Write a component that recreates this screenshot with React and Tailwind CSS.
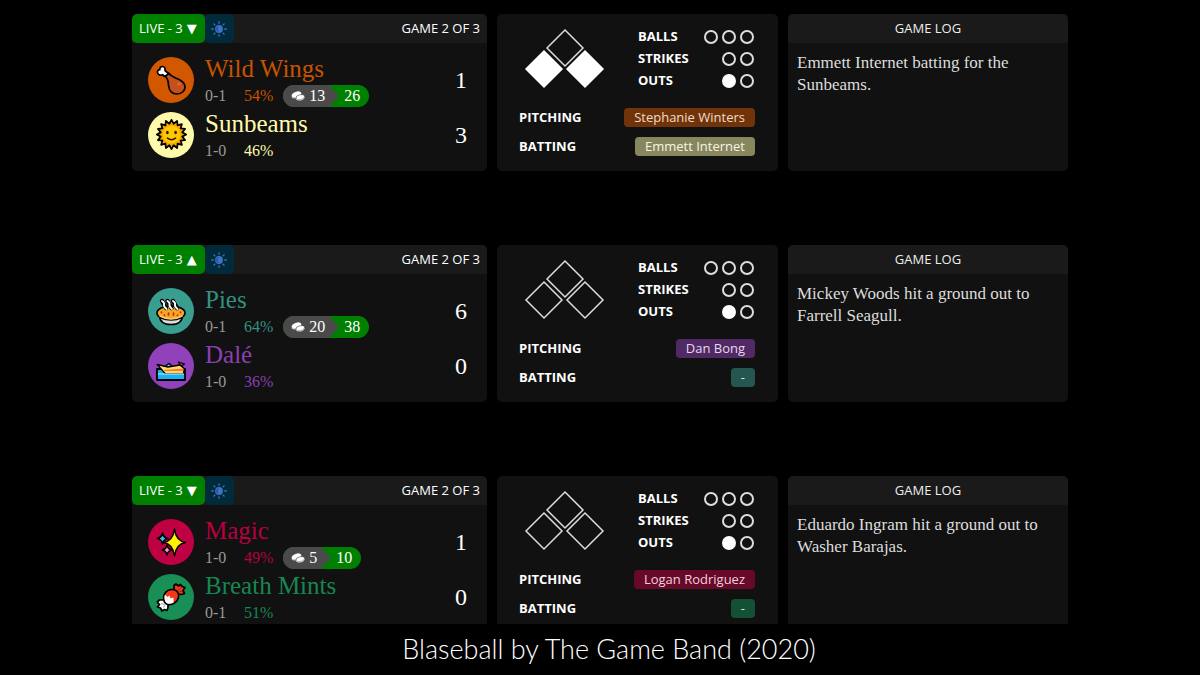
import clsx from "clsx";

const games = [
  {
    half: "▼",
    away: { name: "Wild Wings", record: "0-1", odds: "54%", score: 1, text: "text-[#c75300]", bg: "bg-[#d15700]", Icon: Drumstick },
    home: { name: "Sunbeams", record: "1-0", odds: "46%", score: 3, text: "text-[#fffbab]", bg: "bg-[#fffbab]", Icon: SunFace },
    bet: { stake: 13, payout: 26 },
    bases: [true, false, true],
    pitcher: { name: "Stephanie Winters", bg: "bg-[#713408]", text: "text-[#f0dccb]" },
    batter: { name: "Emmett Internet", bg: "bg-[#88865e]", text: "text-[#f6f5e2]" },
    log: "Emmett Internet batting for the Sunbeams.",
  },
  {
    half: "▲",
    away: { name: "Pies", record: "0-1", odds: "64%", score: 6, text: "text-[#349083]", bg: "bg-[#399d8f]", Icon: Pie },
    home: { name: "Dalé", record: "1-0", odds: "36%", score: 0, text: "text-[#8c3fb3]", bg: "bg-[#9141ba]", Icon: Speedboat },
    bet: { stake: 20, payout: 38 },
    bases: [false, false, false],
    pitcher: { name: "Dan Bong", bg: "bg-[#512965]", text: "text-[#e6daec]" },
    batter: { name: "-", bg: "bg-[#255750]", text: "text-[#d5e9e6]" },
    log: "Mickey Woods hit a ground out to Farrell Seagull.",
  },
  {
    half: "▼",
    away: { name: "Magic", record: "1-0", odds: "49%", score: 1, text: "text-[#b80041]", bg: "bg-[#bf0043]", Icon: Sparkles },
    home: { name: "Breath Mints", record: "0-1", odds: "51%", score: 0, text: "text-[#178751]", bg: "bg-[#178f55]", Icon: Candy },
    bet: { stake: 5, payout: 10 },
    bases: [false, false, false],
    pitcher: { name: "Logan Rodriguez", bg: "bg-[#68092a]", text: "text-[#edd2db]" },
    batter: { name: "-", bg: "bg-[#145033]", text: "text-[#d0e8dc]" },
    log: "Eduardo Ingram hit a ground out to Washer Barajas.",
  },
];

function Drumstick() {
  return (
    <svg viewBox="0 0 30 30" className="size-[30px]" stroke="#000" strokeWidth="1.700" strokeLinejoin="round">
      <path d="M9 11 C12 14 12.500 17 12.500 20 C13 26 16.500 29 21 29 C26 29 29.200 25.500 29 21.500 C28.500 16 23 14.500 19.500 13 C16 11.500 14 10 12.500 8 Z" fill="#c4501b" />
      <path d="M8.500 11.500 L6.500 9.700 C4.500 10.800 1.800 9.800 1.500 7.500 C1.200 5.800 2.300 4.700 3.800 4.700 C3.800 2.500 5 1.300 6.700 1.500 C8.700 1.900 9.500 3.800 9 5.500 L12.800 8.800 Z" fill="#fff" />
      <circle cx="23" cy="19" r="1.800" fill="#d86a3a" stroke="none" />
    </svg>
  );
}

function SunFace() {
  const points = Array.from({ length: 32 }, (_, i) => {
    const r = i % 2 ? 10.6 : 14.2;
    const a = (i * Math.PI) / 16;
    return `${15 + r * Math.sin(a)},${15 - r * Math.cos(a)}`;
  }).join(" ");
  return (
    <svg viewBox="0 0 30 30" className="size-[31px]">
      <polygon points={points} fill="#f7a800" stroke="#000" strokeWidth="1.700" strokeLinejoin="round" />
      <circle cx="15" cy="15" r="8.500" fill="#ffc800" />
      <ellipse cx="11" cy="13" rx="1.300" ry="1.700" fill="#2b1c00" />
      <ellipse cx="19" cy="13" rx="1.300" ry="1.700" fill="#2b1c00" />
      <path d="M11 18.500 Q15 21.500 19 18.500" fill="none" stroke="#2b1c00" strokeWidth="1.400" strokeLinecap="round" />
    </svg>
  );
}

function Pie() {
  return (
    <svg viewBox="0 0 30 30" className="size-[30px]" strokeLinejoin="round" strokeLinecap="round">
      <path d="M3.500 19 C3.500 25 7 28.500 15 28.500 C23 28.500 26.500 25 26.500 19 Z" fill="#dcdcdc" stroke="#000" strokeWidth="1.600" />
      <ellipse cx="15" cy="17" rx="14" ry="7" fill="#f5a623" stroke="#000" strokeWidth="1.600" />
      <path d="M4 20 Q15 26 26 20" fill="none" stroke="#f8c86a" strokeWidth="1.500" />
      <g fill="none" stroke="#000" strokeWidth="4.400">
        <path d="M6 5 L10 12M11.500 5 L15.500 12M17 5 L21 12" />
      </g>
      <g fill="none" stroke="#fff" strokeWidth="1.900">
        <path d="M6 5 Q8.500 6.500 8 8.500 T10.500 13M11.500 5 Q14 6.500 13.500 8.500 T16 13M17 5 Q19.500 6.500 19 8.500 T21.500 13" />
      </g>
      <path d="M5.500 16v.500M8.500 19v.500M12.500 17v2M17.500 17v2M21.500 19v.500M24.500 16v.500" stroke="#c3281c" strokeWidth="1.700" />
    </svg>
  );
}

function Speedboat() {
  return (
    <svg viewBox="0 0 30 30" className="size-[30px]" strokeLinejoin="round">
      <path d="M1 18 H29 V29 H1 Z" fill="#16b4f0" stroke="#000" strokeWidth="1.800" />
      <path d="M9.500 15 L13 12.500 L17 16" fill="#5fd0ee" stroke="#000" strokeWidth="1.500" />
      <path d="M22.500 11 L28.500 13 L26 14.500 L25 17 Z" fill="#b8422f" stroke="#000" strokeWidth="1.300" />
      <path d="M1.200 13.500 L12 16 L24 14 L28 17.500 L27.500 23 H9.500 Z" fill="#ffd866" stroke="#000" strokeWidth="1.300" />
      <path d="M7 19 L27.500 17.500 L27.500 20 H8.500 Z" fill="#f58233" />
      <path d="M2 23 H28 V28 H2 Z" fill="#16b4f0" />
      <path d="M2 23 H28" fill="none" stroke="#bfeeff" strokeWidth="1.200" />
    </svg>
  );
}

function Sparkles() {
  return (
    <svg viewBox="0 0 30 30" className="size-[30px]" stroke="#000" strokeWidth="1.500" strokeLinejoin="round">
      <path d="M18.500 2 Q20 14 29.500 15.500 Q20 17 18.500 29 Q17 17 7.500 15.500 Q17 14 18.500 2 Z" fill="#fff100" />
      <path d="M6.500 6 Q7.300 10.700 12 11.500 Q7.300 12.300 6.500 17 Q5.700 12.300 1 11.500 Q5.700 10.700 6.500 6 Z" fill="#34c6f4" />
      <path d="M11 18 Q11.800 22.200 16 23 Q11.800 23.800 11 28 Q10.200 23.800 6 23 Q10.200 22.200 11 18 Z" fill="#f59ac4" />
    </svg>
  );
}

function Candy() {
  return (
    <svg viewBox="0 0 30 30" className="size-[30px]" stroke="#000" strokeWidth="1.700" strokeLinejoin="round">
      <path d="M18 9.500 L18 3.500 L20 2 L22.500 4 L24.500 2.500 L26 4.500 L29 5.500 L27 8.500 L28.500 11.500 L25.500 12.500 L20.500 12 Z" fill="#f03a17" />
      <path d="M9 18 L3.500 18 L1.300 20 L3.500 22.500 L1.500 25 L4.500 26 L6 29 L8.500 27.500 L11 28.500 L12 25.500 L12 21 Z" fill="#fff" />
      <path d="M8 18.500 C6.500 13 10 7.500 16 7.500 C21 7.500 23.500 11.500 22.500 15.500 C21.500 20 16.500 23.500 12 22.500 C10 22 8.500 20.500 8 18.500 Z" fill="#f03a17" />
      <path d="M9 12.500 L11.500 15 L13.500 13.500 L14.500 16.500 L17.500 15.500 L17.500 20.700 C15.500 21.800 13.500 22 12 21.700 C10.300 21.300 9.200 20 8.800 18.300 C8.300 16 8.300 14 9 12.500 Z" fill="#fff" stroke="none" />
      <path d="M5 21.500 L8.500 22.500M7.500 25.500 L9 23" stroke="#999" strokeWidth="0.900" />
      <path d="M21 9 L24.500 6M22 10 L26 9.500" stroke="#a81d08" strokeWidth="0.900" />
    </svg>
  );
}

function Eclipse() {
  return (
    <svg viewBox="0 0 16 16" className="size-4" fill="#3d73c9" role="img" aria-label="Solar eclipse">
      <circle cx="8" cy="8" r="3.900" />
      <path d="M8 5 A3 3 0 0 0 8 11 A4.500 4.500 0 0 1 8 5 Z" fill="#2a55a0" />
      <g stroke="#3d73c9" strokeWidth="1.300" strokeLinecap="round">
        <path d="M8 .8v1.400M8 13.800v1.400M.8 8h1.400M13.800 8h1.400M2.900 2.900l1 1M12.100 12.100l1 1M2.900 13.100l1-1M12.100 3.900l1-1" />
      </g>
    </svg>
  );
}

function Coins() {
  return (
    <svg viewBox="0 0 14 11" className="h-[11px] w-[14px]" aria-hidden="true">
      <ellipse cx="5.500" cy="4.600" rx="5" ry="2.900" transform="rotate(-22 5.500 4.600)" fill="#fff" />
      <path d="M.8 6.600 C2.500 8.400 4.500 8 6 7.400" fill="none" stroke="#ccc" strokeWidth="1.300" />
      <ellipse cx="9.300" cy="7.200" rx="4.400" ry="2.500" transform="rotate(-14 9.300 7.200)" fill="#fff" stroke="#4a4a4a" strokeWidth="0.600" />
      <path d="M5.200 9 C7.500 11 12 10.200 13.500 7.600" fill="none" stroke="#ddd" strokeWidth="1" />
    </svg>
  );
}

function Bet({ stake, payout }) {
  return (
    <span className="ml-[10px] flex h-[22px] items-center overflow-hidden rounded-full bg-[#008000] text-white">
      <span className="flex h-full items-center gap-1 bg-[#4a4a4a] pr-1 pl-2">
        <Coins />
        {stake}
      </span>
      <svg viewBox="0 0 10 22" className="h-[22px] w-[10px]" aria-hidden="true">
        <path d="M0 0 L10 11 L0 22 Z" fill="#4a4a4a" />
      </svg>
      <span className="pr-[9px] pl-[5px]">{payout}</span>
    </span>
  );
}

function Team({ team, bet }) {
  const { Icon } = team;
  return (
    <div className="flex h-[55px] items-center">
      <div className={clsx("flex size-[46px] shrink-0 items-center justify-center rounded-full", team.bg)}>
        <Icon />
      </div>
      <div className="ml-[11px] flex-1">
        <h2 className={clsx("text-[25px] leading-[32px]", team.text)}>{team.name}</h2>
        <div className="flex h-[22px] items-center text-[16px] leading-[22px]">
          <span className="w-[39px] text-[#999]">{team.record}</span>
          <span className={team.text}>{team.odds}</span>
          {bet && <Bet {...bet} />}
        </div>
      </div>
      <div className="text-[24px] text-white">{team.score}</div>
    </div>
  );
}

function Bases({ bases }) {
  const spots = [
    [20, 41],
    [41, 20],
    [61, 41],
  ];
  return (
    <svg viewBox="0 0 81 61" className="h-[61px] w-[81px]" role="img" aria-label="Bases">
      {spots.map(([x, y], i) => (
        <path
          key={x}
          d={`M${x} ${y - 18} l18 18 l-18 18 l-18 -18 Z`}
          fill={bases[i] ? "#fff" : "none"}
          stroke={bases[i] ? "#fff" : "#ddd"}
          strokeWidth="1.500"
        />
      ))}
    </svg>
  );
}

function Count({ label, total, filled = 0 }) {
  return (
    <div className="flex h-[22px] items-center justify-between">
      <span className="font-bold">{label}</span>
      <span className="flex gap-1">
        {Array.from({ length: total }, (_, i) => (
          <span
            key={i}
            className={clsx("size-[14px] rounded-full border-2", i < filled ? "border-white bg-white" : "border-[#ddd]")}
          />
        ))}
      </span>
    </div>
  );
}

function Player({ label, player }) {
  return (
    <div className="flex h-[19px] items-center justify-between">
      <span className="font-bold">{label}</span>
      <span className={clsx("rounded-[4px] px-[10px] leading-[19px]", player.bg, player.text)}>
        {player.name}
      </span>
    </div>
  );
}

function Game({ game }) {
  return (
    <article className="grid h-[157px] grid-cols-[355fr_281fr_280fr] gap-[10px]">

      <section className="overflow-hidden rounded-[5px] bg-[#111]">
        <header className="flex h-[29px] items-center bg-[#1a1a1a] font-['Open_Sans',sans-serif] text-[13px] text-white">
          <span className="flex h-full items-center gap-1 rounded-[5px] bg-[#008000] pr-2 pl-[7px]">
            LIVE - 3
            <span className="font-['DejaVu_Sans',sans-serif]">{game.half}</span>
          </span>
          <span className="flex h-full w-[29px] items-center justify-center rounded-[5px] bg-[#012b3b]">
            <Eclipse />
          </span>
          <span className="ml-auto pr-[7px]">GAME 2 OF 3</span>
        </header>
        <div className="py-[9px] pr-5 pl-4 font-['Liberation_Serif',serif]">
          <Team team={game.away} bet={game.bet} />
          <Team team={game.home} />
        </div>
      </section>

      <section className="rounded-[5px] bg-[#111] pt-3 pr-[23px] pl-[22px] font-['Open_Sans',sans-serif] text-[13px] text-white">
        <div className="flex justify-between pr-px">
          <div className="pt-[2px] pl-[5px]">
            <Bases bases={game.bases} />
          </div>
          <div className="w-[116px]">
            <Count label="BALLS" total={3} />
            <Count label="STRIKES" total={2} />
            <Count label="OUTS" total={2} filled={1} />
          </div>
        </div>
        <div className="mt-4 flex flex-col gap-[10px]">
          <Player label="PITCHING" player={game.pitcher} />
          <Player label="BATTING" player={game.batter} />
        </div>
      </section>

      <section className="overflow-hidden rounded-[5px] bg-[#111]">
        <h3 className="flex h-[29px] items-center justify-center bg-[#1a1a1a] font-['Open_Sans',sans-serif] text-[13px] text-[#eee]">
          GAME LOG
        </h3>
        <p className="p-[9px] font-['Liberation_Serif',serif] text-[17px] leading-[22px] text-[#ddd]">
          {game.log}
        </p>
      </section>

    </article>
  );
}

export default function App() {
  return (
    <div className="flex h-screen flex-col bg-black">
      <main className="min-h-0 flex-1 overflow-hidden pt-[14px]">
        <div className="mx-auto flex max-w-[936px] flex-col gap-[74px]">
          {games.map((game) => (
            <Game key={game.away.name} game={game} />
          ))}
        </div>
      </main>
      <footer className="flex h-[51px] items-center justify-center pl-[18px] font-['Lato',sans-serif] text-[27px] font-light text-white">
        Blaseball by The Game Band (2020)
      </footer>
    </div>
  );
}
